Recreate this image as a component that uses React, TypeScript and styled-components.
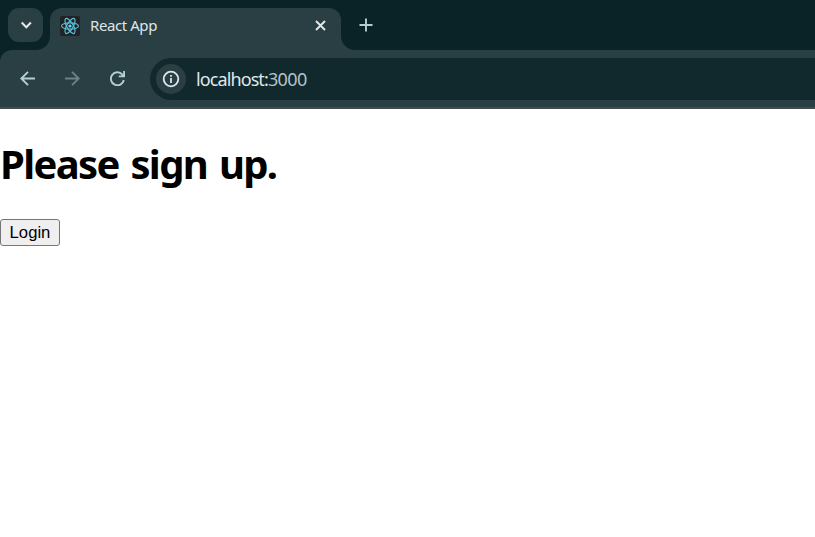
import React from "react";
import styled, { createGlobalStyle } from "styled-components";

const STRIP = "#0a2327";
const BAR = "#293f43";
const FIELD = "#11292d";
const ICON = "#b3cfd3";

const GlobalStyle = createGlobalStyle`
  html, body { margin: 0; background: #fff; overflow: hidden; }
  *, *::before, *::after { box-sizing: border-box; }
`;

const Window = styled.div`
  display: flex;
  flex-direction: column;
  height: 100vh;
  background: #fff;
`;

const TabStrip = styled.header`
  display: flex;
  flex: 0 0 50px;
  padding: 8px 8px 0;
  background: ${STRIP};
`;

const PlainButton = styled.button`
  display: flex;
  align-items: center;
  justify-content: center;
  padding: 0;
  border: 0;
  background: none;
  color: ${ICON};
  svg { display: block; }
`;

const TabSearch = styled(PlainButton)`
  width: 35px;
  height: 34px;
  border-radius: 11px;
  background: ${BAR};
  color: #e3e9ea;
`;

const Tab = styled.div`
  position: relative;
  display: flex;
  align-items: center;
  width: 291px;
  height: 42px;
  margin-left: 7px;
  padding: 0 11px 7px 10px;
  border-radius: 12px 12px 0 0;
  background: ${BAR};

  &::before, &::after {
    content: "";
    position: absolute;
    bottom: 0;
    width: 14px;
    height: 14px;
  }
  &::before {
    right: 100%;
    background: radial-gradient(circle at 0 0, transparent 13.5px, ${BAR} 14.5px);
  }
  &::after {
    left: 100%;
    background: radial-gradient(circle at 100% 0, transparent 13.5px, ${BAR} 14.5px);
  }
`;

const Favicon = styled.span`
  display: flex;
  width: 20px;
  height: 20px;
  border-radius: 2px;
  background: #222222;
`;

const TabTitle = styled.span`
  flex: 1;
  margin-left: 10px;
  padding-bottom: 2px;
  color: #dfe6e8;
  font: 15px/20px "Noto Sans", sans-serif;
  letter-spacing: -0.42px;
  white-space: nowrap;
`;

const CloseButton = styled(PlainButton)`
  width: 20px;
  height: 20px;
  padding-bottom: 1px;
  color: #e3e9ea;
`;

const NewTab = styled(PlainButton)`
  width: 34px;
  height: 34px;
  margin-left: 8px;
`;

const ToolbarBack = styled.div`
  flex: 0 0 59px;
  background: ${STRIP};
`;

const Toolbar = styled.nav`
  display: flex;
  height: 59px;
  padding: 8px 0 7px 10px;
  border-bottom: 2px solid #474b4e;
  border-top-left-radius: 12px;
  background: ${BAR};
`;

const NavButton = styled(PlainButton)<{ $muted?: boolean }>`
  width: 35px;
  height: 41px;
  margin-right: 10px;
  color: ${(p) => (p.$muted ? "#6e8286" : ICON)};
`;

const AddressBar = styled.div`
  display: flex;
  align-items: center;
  flex: 1;
  height: 42px;
  margin-left: 5px;
  padding-left: 6px;
  border-radius: 21px 0 0 21px;
  background: ${FIELD};
`;

const SiteInfo = styled(PlainButton)`
  width: 30px;
  height: 30px;
  border-radius: 50%;
  background: ${BAR};
  color: #dfe6e8;
`;

const Address = styled.span`
  margin-left: 10px;
  color: #dfe8e9;
  font: 18px/24px "Noto Sans", sans-serif;
  letter-spacing: -0.9px;
  white-space: nowrap;
`;

const Port = styled.span`
  color: #b3c3c6;
  letter-spacing: -0.55px;
`;

const Page = styled.main`
  padding-top: 27px;
`;

const Heading = styled.h1`
  margin: 0;
  color: #000;
  font: 700 40px/56px "Noto Sans", sans-serif;
  letter-spacing: -1.65px;
  word-spacing: 3px;
  white-space: nowrap;
`;

const LoginButton = styled.button`
  display: block;
  width: 60px;
  height: 27px;
  margin-top: 27px;
  padding: 0;
  border: 1px solid #767676;
  border-radius: 3px;
  background: #efefef;
  color: #000;
  font: 16.67px/25px "Liberation Sans", sans-serif;
`;

const ReactLogo = () => (
  <svg width="20" height="20" viewBox="0 0 20 20" fill="none" stroke="#58bdd8" strokeWidth="1.2">
    <ellipse cx="10" cy="10" rx="8.5" ry="3.2" />
    <ellipse cx="10" cy="10" rx="8.5" ry="3.2" transform="rotate(60 10 10)" />
    <ellipse cx="10" cy="10" rx="8.5" ry="3.2" transform="rotate(120 10 10)" />
    <circle cx="10" cy="10" r="1.6" fill="#61dafb" stroke="none" />
  </svg>
);

export default function App() {
  return (
    <Window>
      <GlobalStyle />
      <TabStrip>
        <TabSearch aria-label="Search tabs">
          <svg width="14" height="14" viewBox="0 0 14 14" fill="none" stroke="currentColor" strokeWidth="2.1">
            <path d="M2.7 4.6 7.3 9.2 11.9 4.6" />
          </svg>
        </TabSearch>
        <Tab>
          <Favicon>
            <ReactLogo />
          </Favicon>
          <TabTitle>React App</TabTitle>
          <CloseButton aria-label="Close tab">
            <svg width="11" height="11" viewBox="0 0 11 11" fill="none" stroke="currentColor" strokeWidth="1.9">
              <path d="M1 1 10 10M10 1 1 10" />
            </svg>
          </CloseButton>
        </Tab>
        <NewTab aria-label="New tab">
          <svg width="14" height="14" viewBox="0 0 14 14" fill="none" stroke="currentColor" strokeWidth="1.9">
            <path d="M7 .5V13.5M.5 7H13.5" />
          </svg>
        </NewTab>
      </TabStrip>
      <ToolbarBack>
        <Toolbar>
          <NavButton aria-label="Back">
            <svg width="15" height="15" viewBox="0 0 15 15" fill="none" stroke="currentColor" strokeWidth="1.9">
              <path d="M15 7.5H1.5M8 .8 1.3 7.5 8 14.2" />
            </svg>
          </NavButton>
          <NavButton $muted aria-label="Forward">
            <svg width="15" height="15" viewBox="0 0 15 15" fill="none" stroke="currentColor" strokeWidth="1.9">
              <path d="M0 7.5H13.5M7 .8 13.7 7.5 7 14.2" />
            </svg>
          </NavButton>
          <NavButton aria-label="Reload">
            <svg width="15" height="15" viewBox="0 0 15 15" fill="none" stroke="currentColor" strokeWidth="1.9">
              <path d="M12.4 3.6A6.5 6.5 0 1 0 13.8 9" />
              <path d="M15 0V6.3H8.7V4.5H11.2L13.2 2.5V0Z" fill="currentColor" stroke="none" />
            </svg>
          </NavButton>
          <AddressBar>
            <SiteInfo aria-label="Site information">
              <svg width="18" height="18" viewBox="0 0 18 18" fill="none" stroke="currentColor" strokeWidth="1.8">
                <circle cx="9" cy="9" r="7.3" />
                <path d="M9 8V13M9 5V6.8" />
              </svg>
            </SiteInfo>
            <Address>
              localhost:<Port>3000</Port>
            </Address>
          </AddressBar>
        </Toolbar>
      </ToolbarBack>
      <Page>
        <Heading>Please sign up.</Heading>
        <LoginButton>Login</LoginButton>
      </Page>
    </Window>
  );
}
